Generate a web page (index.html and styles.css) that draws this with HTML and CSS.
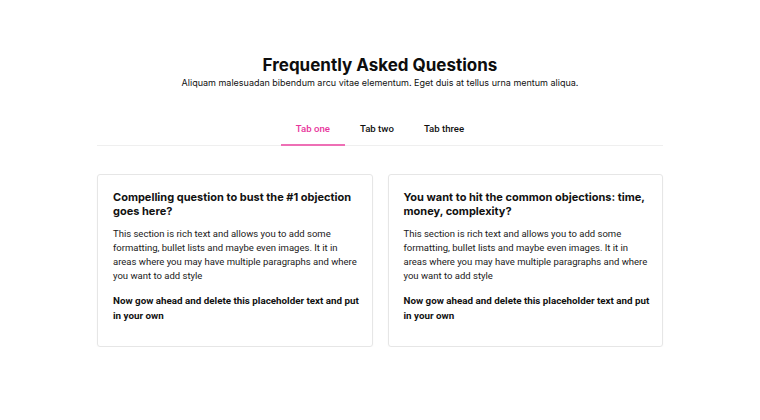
FILE: index.html
```html
<!DOCTYPE html>
<html>
<head>
<meta charset="utf-8">
<link rel="stylesheet" href="styles.css">
</head>
<body>
<main class="faq">
  <header class="faq-head">
    <h1 class="title">Frequently Asked Questions</h1>
    <p class="subtitle">Aliquam malesuadan bibendum arcu vitae elementum. Eget duis at tellus urna mentum aliqua.</p>
  </header>
  <nav class="tabs">
    <span class="tab active">Tab one</span>
    <span class="tab">Tab two</span>
    <span class="tab">Tab three</span>
  </nav>
  <section class="cards">
    <article class="card">
      <h2 class="q">Compelling question to bust the #1 objection goes here?</h2>
      <p class="a">This section is rich text and allows you to add some<br>formatting, bullet lists and maybe even images. It it in<br>areas where you may have multiple paragraphs and where<br>you want to add style</p>
      <p class="a strong">Now gow ahead and delete this placeholder text and put<br>in your own</p>
    </article>
    <article class="card">
      <h2 class="q">You want to hit the common objections: time, money, complexity?</h2>
      <p class="a">This section is rich text and allows you to add some<br>formatting, bullet lists and maybe even images. It it in<br>areas where you may have multiple paragraphs and where<br>you want to add style</p>
      <p class="a strong">Now gow ahead and delete this placeholder text and put<br>in your own</p>
    </article>
  </section>
</main>
</body>
</html>
```
FILE: styles.css
```css
* { box-sizing: border-box; }
html, body { margin: 0; background: #fff; }
body { font-family: Roboto, "Noto Sans", sans-serif; color: #111; }
.faq { width: 566px; margin: 0 auto; padding-top: 55px; }
.faq-head { text-align: center; }
.title { font-family: Inter, sans-serif; font-weight: 700; font-size: 17px; line-height: 20px; margin: 0; color: #0d0d0d; }
.subtitle { font-family: Inter, sans-serif; font-size: 9px; line-height: 13px; margin: 1px 0 0; color: #111; }
.tabs { display: flex; justify-content: center; margin-top: 27px; border-bottom: 1px solid #efefef; }
.tab { font-size: 9.6px; font-weight: 500; line-height: 14px; padding: 6px 15px 8px; color: #111; border-bottom: 2px solid transparent; margin-bottom: -1px; }
.tab.active { color: #e8359c; border-bottom-color: #ee6fb5; }
.cards { display: grid; grid-template-columns: 1fr 1fr; gap: 15px; margin-top: 28px; }
.card { border: 1px solid #e6e6e6; border-radius: 3px; padding: 15px 8px 23px 15px; box-shadow: 0 1px 2px rgba(0,0,0,0.03); }
.q { font-family: Inter, sans-serif; font-weight: 700; font-size: 11px; line-height: 14.3px; margin: 0 8px 8px 0; color: #111; }
.a { font-size: 9.5px; line-height: 14.3px; margin: 0 0 9.5px; color: #1a1a1a; }
.a.strong { font-size: 9.8px; font-weight: 700; line-height: 15px; color: #111; margin: 0; }
```
